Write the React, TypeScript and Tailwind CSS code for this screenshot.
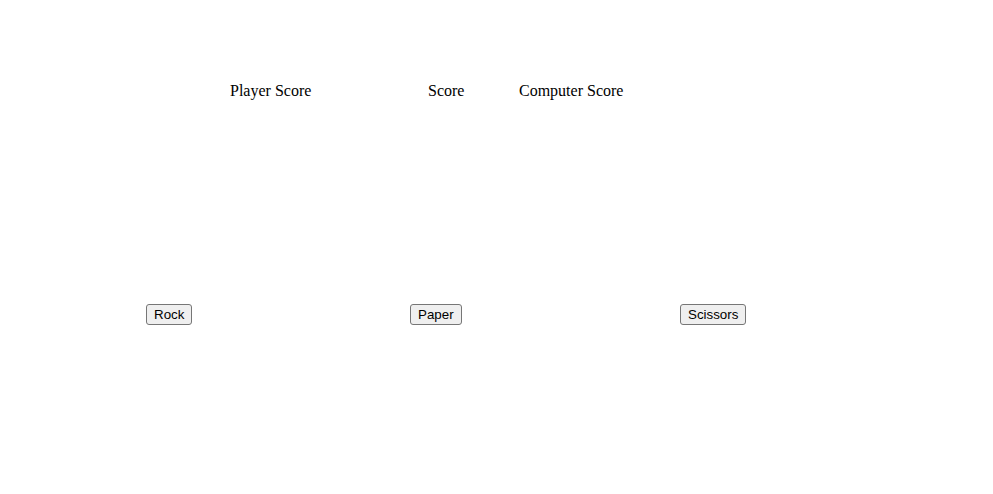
import React from "react";

function Btn({ label }: { label: string }) {
  return (
    <button className="bg-[#efefef] border border-[#767676] rounded-[3px] px-[7px] py-[2px] text-[13.333px] leading-[15px] text-black font-['Liberation_Sans',Arial,sans-serif] hover:bg-[#e5e5e5]">
      {label}
    </button>
  );
}

export default function App() {
  return (
    <div className="w-[993px] h-[494px] bg-white font-['Liberation_Serif','Times_New_Roman',serif] text-black flex flex-col">
      <div className="flex pt-[82px] pl-[230px] text-[16px] leading-[18px]">
        <div className="w-[198px]">Player Score</div>
        <div className="w-[91px]">Score</div>
        <div>Computer Score</div>
      </div>
      <div className="flex pt-[202px] pl-[146px] items-start">
        <div className="w-[264px]">
          <Btn label="Rock" />
        </div>
        <div className="w-[270px]">
          <Btn label="Paper" />
        </div>
        <div>
          <Btn label="Scissors" />
        </div>
      </div>
    </div>
  );
}
